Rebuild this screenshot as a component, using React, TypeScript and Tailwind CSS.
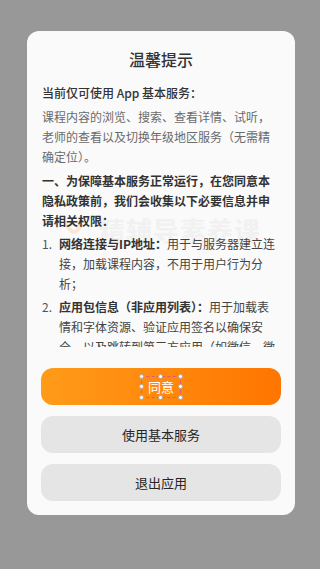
export default function App() {
  return (
    <div
      lang="zh-CN"
      className="min-h-[569px] w-[320px] bg-[#989898] pt-[31px] font-['Noto_Sans_CJK_SC','Noto_Sans',sans-serif]"
    >
      <div className="relative ml-[27px] w-[268px] rounded-[12px] bg-[#fafafa] px-[14px] pt-4 pb-[14px]">
        {/* faint watermark behind the text */}
        <div className="pointer-events-none absolute left-[38px] top-[183px] flex items-center gap-[16px]">
          <svg width="18" height="16" viewBox="0 0 18 16">
            <path d="M2 3 Q9 17 16 3" fill="none" stroke="#fbe6da" strokeWidth="4" strokeLinecap="round" />
          </svg>
          <span className="text-[26px] leading-8 font-bold tracking-[1px] text-[#f1f1f1]">精辅导素养课</span>
        </div>

        <h1 className="text-center text-[16px] leading-6 font-medium text-[#333]">温馨提示</h1>

        <div className="relative mt-[12px] h-[264px] overflow-hidden px-px text-[12px] leading-5">
          <p className="font-medium text-[#333]">当前仅可使用 App 基本服务：</p>
          <p className="mt-1 text-[#6a6a6a]">
            课程内容的浏览、搜索、查看详情、试听，老师的查看以及切换年级地区服务（无需精确定位）。
          </p>
          <p className="mt-1 font-bold text-[#333]">
            一、为保障基本服务正常运行，在您同意本隐私政策前，我们会收集以下必要信息并申请相关权限：
          </p>
          <ol>
            <ListItem num="1." label="网络连接与IP地址：" text="用于与服务器建立连接，加载课程内容，不用于用户行为分析；" />
            <ListItem
              num="2."
              label="应用包信息（非应用列表）："
              text="用于加载表情和字体资源、验证应用签名以确保安全，以及跳转到第三方应用（如微信、微博等）时判断应用是否已安装；"
            />
            <ListItem num="3." label="设备信息：" text="用于适配屏幕显示与保障运行稳定。" />
          </ol>
        </div>

        <div className="mt-[21px] flex flex-col gap-[11px]">
          <button className="flex h-[37px] items-center justify-center rounded-[12px] bg-gradient-to-r from-[#ff9b18] to-[#ff7500] text-[13px] text-white">
            <span className="relative leading-5">
              同意
              {/* editor selection box */}
              <span className="absolute -top-[1px] -bottom-[1px] -left-[7px] -right-[7px] border border-dashed border-[#e0587e]">
                <Handle cls="-left-[3px] -top-[3px]" />
                <Handle cls="left-1/2 -ml-[2.5px] -top-[3px]" />
                <Handle cls="-right-[3px] -top-[3px]" />
                <Handle cls="-left-[3px] top-1/2 -mt-[2.5px]" />
                <Handle cls="-right-[3px] top-1/2 -mt-[2.5px]" />
                <Handle cls="-left-[3px] -bottom-[3px]" />
                <Handle cls="left-1/2 -ml-[2.5px] -bottom-[3px]" />
                <Handle cls="-right-[3px] -bottom-[3px]" />
              </span>
            </span>
          </button>
          <button className="h-[37px] rounded-[12px] bg-[#e5e5e5] text-[13px] text-[#262626]">使用基本服务</button>
          <button className="h-[37px] rounded-[12px] bg-[#e5e5e5] text-[13px] text-[#262626]">退出应用</button>
        </div>
      </div>
    </div>
  )
}

function ListItem({ num, label, text }: { num: string; label: string; text: string }) {
  return (
    <li className="mt-[3px] flex">
      <span className="w-[17px] shrink-0 text-[#555]">{num}</span>
      <span className="flex-1 text-[#444]">
        <span className="font-bold text-[#333]">{label}</span>
        {text}
      </span>
    </li>
  )
}

function Handle({ cls }: { cls: string }) {
  return <span className={`absolute h-[5px] w-[5px] rounded-full border border-[#aaa] bg-white ${cls}`} />
}
